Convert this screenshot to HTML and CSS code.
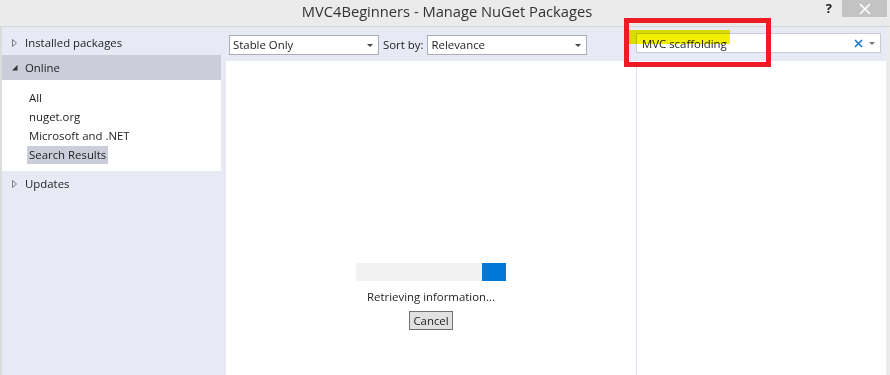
FILE: index.html
```html
<!DOCTYPE html>
<html lang="en">
<head>
    <meta charset="UTF-8">
    <title>MVC4Beginners - Manage NuGet Packages</title>
    <link rel="stylesheet" href="styles.css">
</head>
<body>
    <div class="titlebar">
        <div></div>
        <div class="title">MVC4Beginners - Manage NuGet Packages</div>
        <div class="controls">
            <span class="help">?</span>
            <span class="close">
                <svg width="12" height="12" viewBox="0 0 12 12"><path d="M1 1 L11 11 M11 1 L1 11" stroke="#fff" stroke-width="1.6"/></svg>
            </span>
        </div>
    </div>

    <div class="window">
        <div class="sidebar">
            <div class="node">
                <svg class="arrow" width="8" height="10" viewBox="0 0 8 10"><path d="M1.5 1.5 L5.5 5 L1.5 8.5 Z" fill="none" stroke="#7a7a7a" stroke-width="1"/></svg>
                Installed packages
            </div>
            <div class="node node-open">
                <svg class="arrow" width="8" height="10" viewBox="0 0 8 10"><path d="M6.5 2 L6.5 7.5 L1 7.5 Z" fill="#333"/></svg>
                Online
            </div>
            <ul class="sources">
                <li>All</li>
                <li>nuget.org</li>
                <li>Microsoft and .NET</li>
                <li><span class="selected">Search Results</span></li>
            </ul>
            <div class="node">
                <svg class="arrow" width="8" height="10" viewBox="0 0 8 10"><path d="M1.5 1.5 L5.5 5 L1.5 8.5 Z" fill="none" stroke="#7a7a7a" stroke-width="1"/></svg>
                Updates
            </div>
        </div>

        <div class="main">
            <div class="toolbar">
                <div class="select select-filter">Stable Only<span class="caret"></span></div>
                <span class="sort-label">Sort by:</span>
                <div class="select select-sort">Relevance<span class="caret"></span></div>
                <div class="search">
                    <span class="search-text">MVC scaffolding</span>
                    <svg class="clear" width="9" height="9" viewBox="0 0 9 9"><path d="M1 1 L8 8 M8 1 L1 8" stroke="#1e7bd1" stroke-width="1.7"/></svg>
                    <span class="caret"></span>
                </div>
            </div>
            <div class="content">
                <div class="results">
                    <div class="progress"><div class="progress-fill"></div></div>
                    <div class="status">Retrieving information...</div>
                    <button class="cancel">Cancel</button>
                </div>
                <div class="details"></div>
            </div>
        </div>
    </div>

    <!-- annotations drawn on the screenshot -->
    <div class="highlight"></div>
    <div class="callout"></div>
</body>
</html>
```

FILE: styles.css
```css
body {
    margin: 0;
    width: 890px;
    height: 375px;
    overflow: hidden;
    background-color: #ebebeb;
    font-family: "Open Sans", "Noto Sans", sans-serif;
    font-size: 11.4px;
    color: #1e1e1e;
    position: relative;
}
.titlebar {
    height: 26px;
    display: grid;
    grid-template-columns: 1fr auto 1fr;
    border-bottom: 1px solid #d6d6d6;
}
.title {
    font-size: 14.7px;
    color: #333;
    line-height: 22px;
    padding-left: 4px;
}
.controls {
    justify-self: end;
    display: flex;
    align-items: flex-start;
    margin-right: 3px;
}
.help {
    font-weight: bold;
    font-size: 13px;
    line-height: 17px;
    margin-right: 10px;
    color: #222;
}
.close {
    width: 45px;
    height: 17px;
    background-color: #c3c3c3;
    display: flex;
    justify-content: center;
    align-items: center;
}
.window {
    display: flex;
    height: 348px;
    width: 886px;
    box-sizing: border-box;
    border-left: 2px solid #dcdcdc;
    background-color: #e7eaf5;
}
.sidebar {
    width: 219px;
    padding-top: 3px;
}
.node {
    height: 25px;
    display: flex;
    align-items: center;
    padding-left: 9px;
}
.arrow {
    margin-right: 6px;
}
.node-open {
    background-color: #cbcdda;
}
.sources {
    list-style: none;
    margin: 0;
    padding: 8px 0 7px 25px;
    background-color: #fff;
}
.sources li {
    height: 19px;
    line-height: 19px;
    padding-left: 2px;
}
.selected {
    display: inline-block;
    background-color: #cbcdda;
    margin-left: -2px;
    padding: 0 2px;
    line-height: 18px;
}
.main {
    flex: 1;
    display: flex;
    flex-direction: column;
}
.toolbar {
    height: 34px;
    display: flex;
    align-items: flex-start;
    padding-top: 8px;
    box-sizing: border-box;
    padding-left: 8px;
}
.select {
    height: 20px;
    box-sizing: border-box;
    border: 1px solid #abadb3;
    background-color: #fff;
    padding-left: 3px;
    line-height: 18px;
    position: relative;
}
.select-filter {
    width: 150px;
}
.select-sort {
    width: 160px;
}
.sort-label {
    line-height: 20px;
    margin: 0 4px 0 4px;
}
.caret {
    position: absolute;
    right: 5px;
    top: 8px;
    border-left: 3px solid transparent;
    border-right: 3px solid transparent;
    border-top: 3px solid #444;
}
.search {
    margin-left: auto;
    margin-right: 5px;
    margin-top: -2px;
    width: 245px;
    height: 20px;
    box-sizing: border-box;
    border: 1px solid #c8cbd6;
    background-color: #fff;
    position: relative;
    display: flex;
    align-items: center;
    padding-left: 5px;
}
.search-text {
    flex: 1;
}
.clear {
    margin-right: 17px;
}
.search .caret {
    top: 8px;
    border-top-color: #777;
}
.content {
    flex: 1;
    display: flex;
}
.results {
    width: 410px;
    margin-left: 5px;
    background-color: #fff;
    display: flex;
    flex-direction: column;
    align-items: center;
    padding-top: 202px;
    box-sizing: border-box;
}
.progress {
    width: 150px;
    height: 18px;
    background-color: #f2f2f2;
    display: flex;
    justify-content: flex-end;
}
.progress-fill {
    width: 24px;
    background-color: #0078d7;
}
.status {
    margin-top: 8px;
    line-height: 16px;
}
.cancel {
    margin-top: 6px;
    height: 19px;
    padding: 0 3px;
    font-family: inherit;
    font-size: 11.4px;
    color: #1e1e1e;
    background-color: #e1e1e1;
    border: 1px solid #707070;
    border-radius: 0;
    line-height: 15px;
}
.details {
    flex: 1;
    background-color: #fff;
    border-left: 1px solid #dde2ef;
}
.highlight {
    position: absolute;
    left: 629px;
    top: 30px;
    width: 101px;
    height: 14px;
    background-color: #f0f000;
    mix-blend-mode: multiply;
}
.callout {
    position: absolute;
    left: 624px;
    top: 18px;
    width: 147px;
    height: 49px;
    box-sizing: border-box;
    border: 5px solid #ed1c24;
}
```
